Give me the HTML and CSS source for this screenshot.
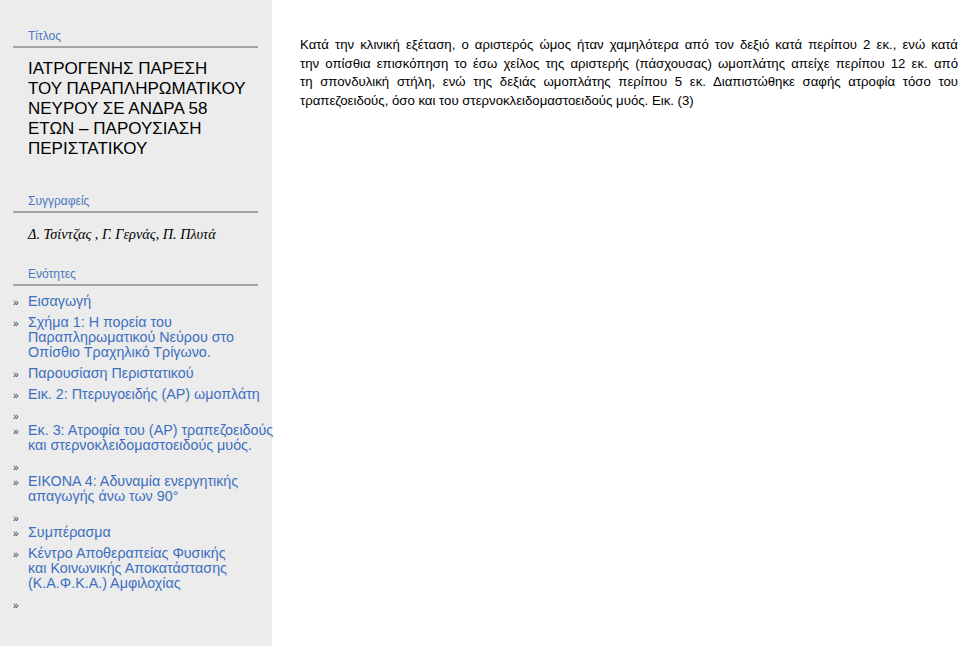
FILE: index.html
```
<!DOCTYPE html>
<html lang="el">
<head>
    <meta charset="UTF-8">
    <meta name="viewport" content="width=device-width, initial-scale=1.0">
    <title>Ιατρογενής πάρεση του παραπληρωματικού νεύρου</title>
    <link rel="stylesheet" href="styles.css">
</head>
<body>
    <div class="page">
        <div class="sidebar">
            <div class="section-label">Τίτλος</div>
            <h1 class="title">ΙΑΤΡΟΓΕΝΗΣ ΠΑΡΕΣΗ<br>ΤΟΥ ΠΑΡΑΠΛΗΡΩΜΑΤΙΚΟΥ<br>ΝΕΥΡΟΥ ΣΕ ΑΝΔΡΑ 58<br>ΕΤΩΝ – ΠΑΡΟΥΣΙΑΣΗ<br>ΠΕΡΙΣΤΑΤΙΚΟΥ</h1>

            <div class="section-label">Συγγραφείς</div>
            <p class="authors">Δ. Τσίντζας , Γ. Γερνάς, Π. Πλυτά</p>

            <div class="section-label">Ενότητες</div>
            <ul class="toc">
                <li><a href="#">Εισαγωγή</a></li>
                <li><a href="#">Σχήμα 1: Η πορεία του<br>Παραπληρωματικού Νεύρου στο<br>Οπίσθιο Τραχηλικό Τρίγωνο.</a></li>
                <li><a href="#">Παρουσίαση Περιστατικού</a></li>
                <li><a href="#">Εικ. 2: Πτερυγοειδής (ΑΡ) ωμοπλάτη</a></li>
                <li class="blank"></li>
                <li><a href="#">Εκ. 3: Ατροφία του (ΑΡ) τραπεζοειδούς<br>και στερνοκλειδομαστοειδούς μυός.</a></li>
                <li class="blank"></li>
                <li><a href="#">ΕΙΚΟΝΑ 4: Αδυναμία ενεργητικής<br>απαγωγής άνω των 90°</a></li>
                <li class="blank"></li>
                <li><a href="#">Συμπέρασμα</a></li>
                <li><a href="#">Κέντρο Αποθεραπείας Φυσικής<br>και Κοινωνικής Αποκατάστασης<br>(Κ.Α.Φ.Κ.Α.) Αμφιλοχίας</a></li>
                <li class="blank"></li>
            </ul>
        </div>

        <div class="content">
            <p>Κατά την κλινική εξέταση, ο αριστερός ώμος ήταν χαμηλότερα από τον δεξιό κατά περίπου 2 εκ., ενώ κατά την&nbsp;οπίσθια επισκόπηση το έσω χείλος της αριστερής (πάσχουσας) ωμοπλάτης απείχε περίπου 12 εκ. από τη&nbsp;σπονδυλική στήλη, ενώ της δεξιάς ωμοπλάτης περίπου 5 εκ. Διαπιστώθηκε σαφής ατροφία τόσο του τραπεζοειδούς, όσο και του στερνοκλειδομαστοειδούς μυός. Εικ. (3)</p>
        </div>
    </div>
</body>
</html>
```
FILE: styles.css
```
html, body {
    margin: 0;
    padding: 0;
    height: 100%;
}
body {
    font-family: "Liberation Sans", Arial, sans-serif;
    background: #fff;
    color: #000;
    overflow: hidden;
}
.page {
    display: flex;
    height: 100%;
}
.sidebar {
    width: 272px;
    flex-shrink: 0;
    background: #ececec;
    padding: 27px 14px 0 13px;
    box-sizing: border-box;
}
.section-label {
    color: #4a78c0;
    font-size: 12px;
    line-height: 18px;
    padding-left: 15px;
    padding-bottom: 1px;
    border-bottom: 2px solid #a4a4a4;
}
.title {
    font-size: 17px;
    font-weight: normal;
    line-height: 20px;
    margin: 11px 0 33px 15px;
}
.authors {
    font-family: "Liberation Serif", "Times New Roman", serif;
    font-style: italic;
    font-size: 14.3px;
    line-height: 18px;
    margin: 12px 0 22px 15px;
}
.toc {
    list-style: none;
    margin: 8px 0 0;
    padding: 0;
    white-space: nowrap;
}
.toc li {
    position: relative;
    padding-left: 15px;
    font-size: 14.3px;
    line-height: 15px;
    min-height: 15px;
    margin-bottom: 6px;
}
.toc li::before {
    content: "»";
    position: absolute;
    left: 0;
    top: 1px;
    font-size: 10px;
    color: #333;
}
.toc li.blank {
    margin-bottom: 0;
}
.toc a {
    color: #3d6fc0;
    text-decoration: none;
}
.content {
    flex: 1;
    padding: 36px 2px 0 28px;
}
.content p {
    margin: 0;
    font-size: 13.2px;
    line-height: 18.7px;
    text-align: justify;
}
```
